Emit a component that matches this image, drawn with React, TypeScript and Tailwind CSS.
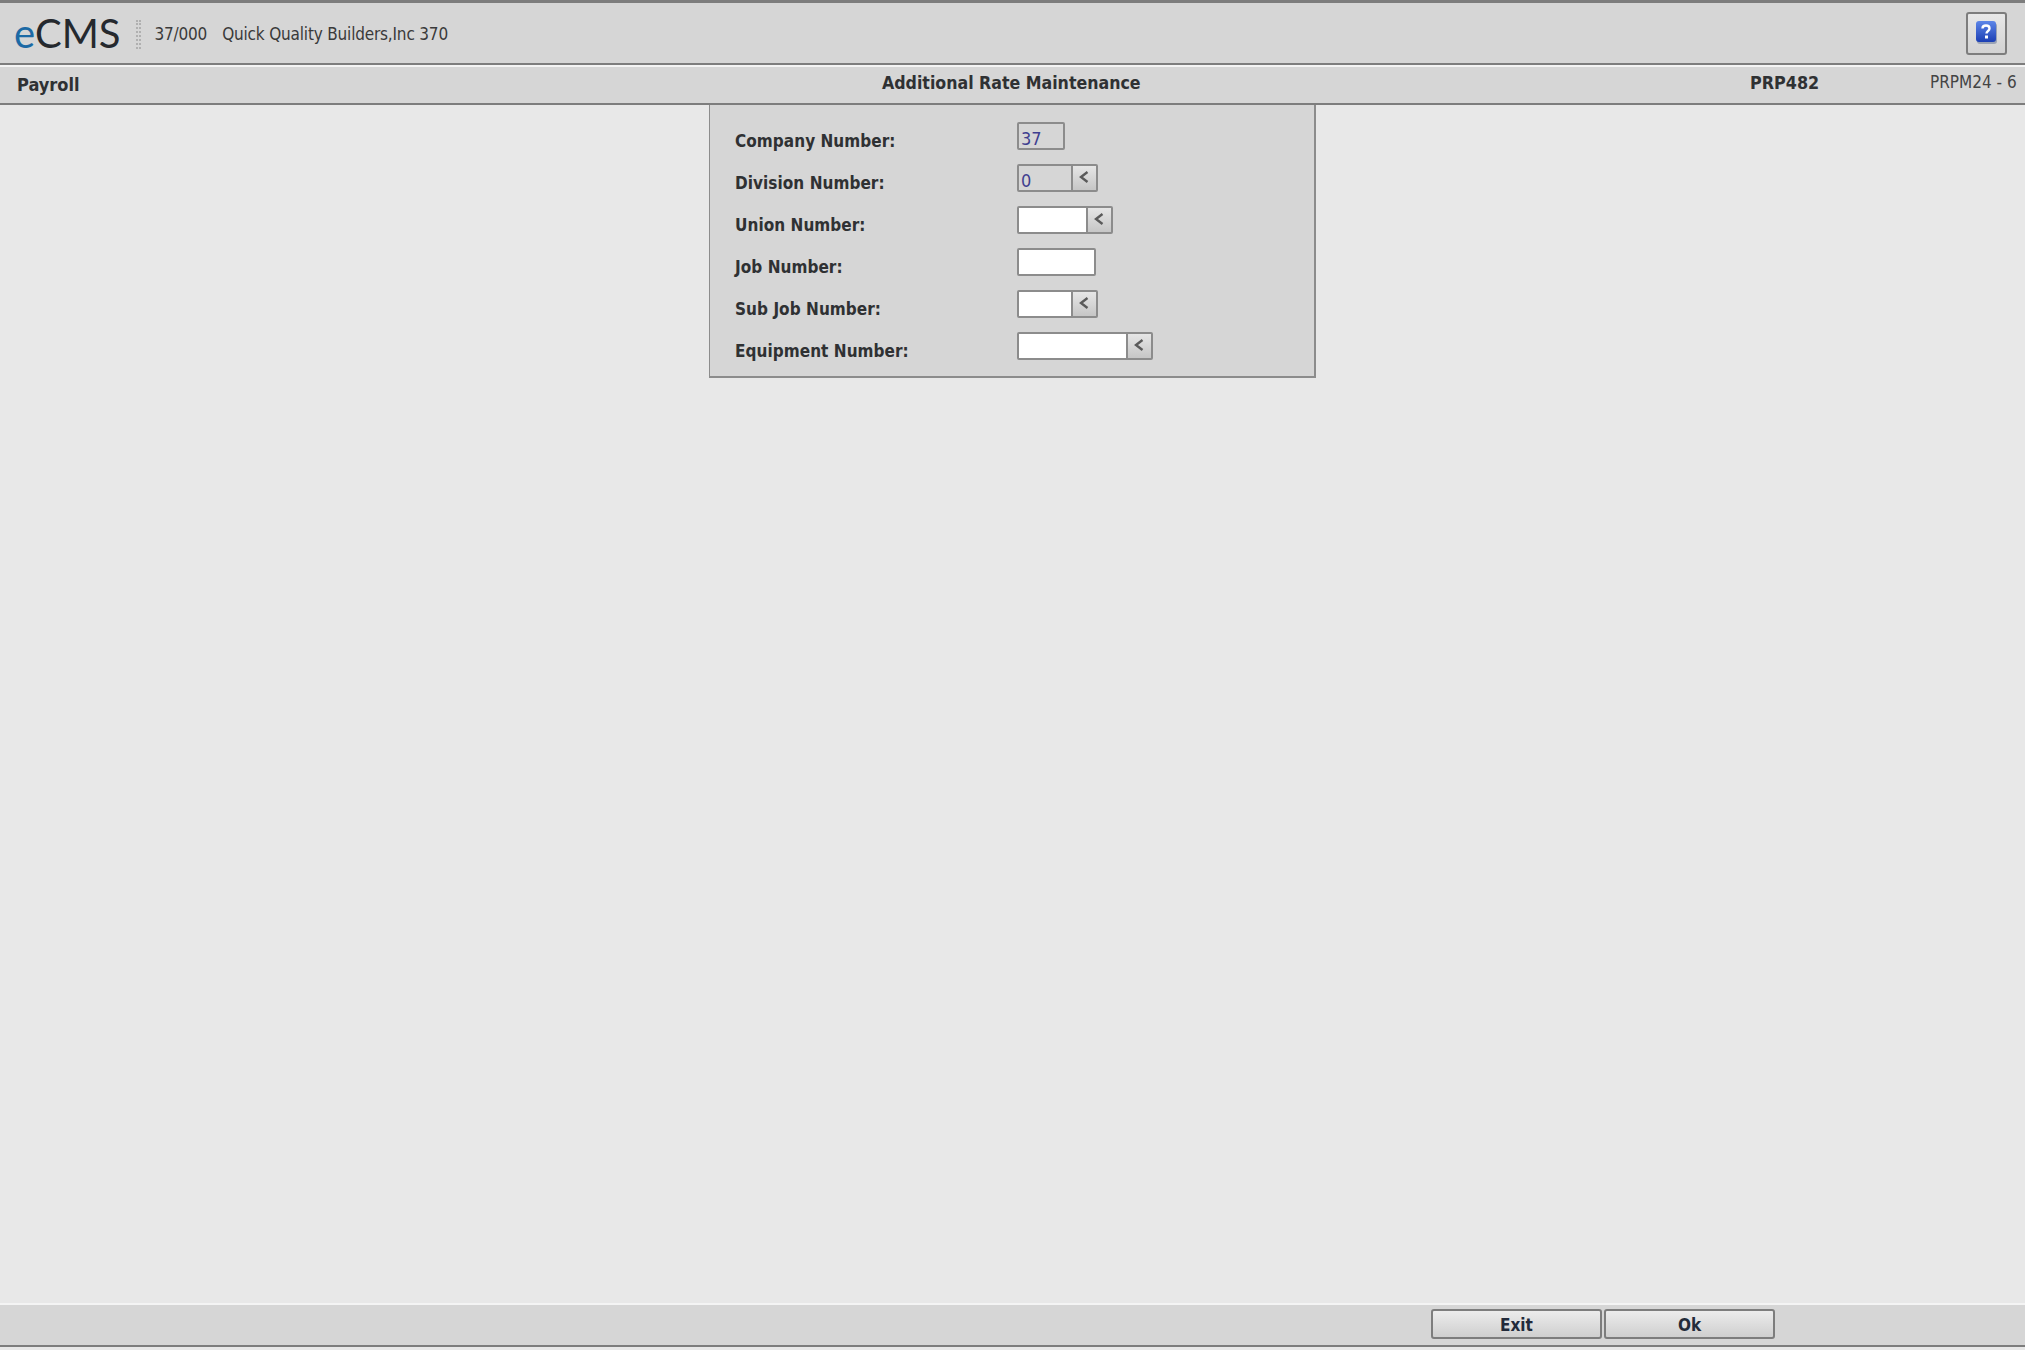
const FONT = "font-['DejaVu_Sans'] font-stretch-condensed";

interface Field {
  label: string;
  value?: string;
  width: number;
  readOnly?: boolean;
  lookup?: boolean;
}

const FIELDS: Field[] = [
  { label: "Company Number:", value: "37", width: 48, readOnly: true },
  { label: "Division Number:", value: "0", width: 56, readOnly: true, lookup: true },
  { label: "Union Number:", width: 71, lookup: true },
  { label: "Job Number:", width: 79 },
  { label: "Sub Job Number:", width: 56, lookup: true },
  { label: "Equipment Number:", width: 111, lookup: true },
];

function HelpIcon() {
  return (
    <svg width="24" height="26" viewBox="0 0 24 26">
      <defs>
        <linearGradient id="help" x1="0" y1="0" x2="0" y2="1">
          <stop offset="0" stopColor="#5d86e8" />
          <stop offset="1" stopColor="#1c3fb4" />
        </linearGradient>
      </defs>
      <rect x="2" y="3" width="20" height="21" rx="3" fill="#9aa3b5" />
      <rect x="1" y="1" width="20" height="21" rx="3" fill="url(#help)" />
      <path
        d="M7.5 8.5c0-2 1.500-3 3.500-3s3.500 1 3.500 3c0 2.500-3 2.500-3 5"
        fill="none"
        stroke="#fff"
        strokeWidth="2.400"
      />
      <rect x="10" y="15.500" width="3" height="3" fill="#fff" />
    </svg>
  );
}

function LookupButton() {
  return (
    <div className="flex w-[25px] items-center justify-center border-l-2 border-[#8c8c8c] bg-gradient-to-b from-[#e6e6e6] to-[#c6c6c6] pr-[2px] pb-[3px]">
      <svg width="12" height="14" viewBox="0 0 12 14">
        <path d="M9.5 2 3 7l6.500 5" fill="none" stroke="#5a5a5a" strokeWidth="2.400" />
      </svg>
    </div>
  );
}

function FieldRow({ field }: { field: Field }) {
  return (
    <div className="mb-[14px] flex h-[28px]">
      <label className="w-[282px] pt-[7px] text-[17px] leading-[24px] font-bold tracking-[0.05px] text-[#2f3133]">
        {field.label}
      </label>
      <div className="flex h-[28px] rounded-[2px] border-2 border-[#8c8c8c]">
        <div
          className={`pt-[2px] pl-[2px] text-[18px] leading-[26px] text-[#3f3f90] ${
            field.readOnly ? "bg-[#d6d6d6]" : "bg-white"
          }`}
          style={{ width: field.width - 4 }}
        >
          {field.value}
        </div>
        {field.lookup && <LookupButton />}
      </div>
    </div>
  );
}

function FooterButton({ label }: { label: string }) {
  return (
    <button className="h-[30px] w-[171px] rounded-[3px] border-2 border-[#7d7d7d] bg-gradient-to-b from-[#ececec] to-[#cfcfcf] pt-[2px] text-[17px] leading-none font-bold text-[#222a3a]">
      {label}
    </button>
  );
}

export default function App() {
  return (
    <div className={`flex h-[1350px] w-[2025px] flex-col overflow-hidden bg-[#e8e8e8] ${FONT}`}>
      <header className="flex h-[63px] items-center border-t-[3px] border-[#7d7d7d] bg-[#d6d6d6] pr-[18px] pl-[14px]">
        <div className="font-['Lato'] text-[40px] leading-none font-normal text-[#25292e]">
          <span className="text-[#1c6aa5]">e</span>CMS
        </div>
        <div className="mx-[15px] mt-[2px] h-[29px] w-[5px] border-x-2 border-dotted border-[#b0b0b0]" />
        <span className="mt-[3px] ml-[-1px] text-[17px] tracking-[-0.2px] text-[#3a3a3a]">37/000</span>
        <span className="mt-[3px] ml-[15px] text-[17px] tracking-[-0.18px] text-[#3a3a3a]">
          Quick Quality Builders,Inc 370
        </span>
        <button className="ml-auto flex h-[43px] w-[41px] items-center justify-center rounded-[3px] border-2 border-[#7d7d7d] bg-gradient-to-b from-[#e8e8e8] to-[#d2d2d2]">
          <HelpIcon />
        </button>
      </header>

      <div className="flex h-[42px] items-center border-t-2 border-b-2 border-t-[#7d7d7d] border-b-[#7d7d7d] bg-[#d6d6d6] shadow-[inset_0_2px_0_#f4f4f4] text-[18px] font-bold text-[#2f3133]">
        <span className="w-[882px] pl-[17px]">Payroll</span>
        <span className="mt-[-2px] w-[868px] text-[17.600px]">Additional Rate Maintenance</span>
        <span className="mt-[-2px] w-[180px] text-[17.800px]">PRP482</span>
        <span className="mt-[-2px] text-[17px] font-normal text-[#444]">PRPM24 - 6</span>
      </div>

      <main className="flex-1">
        <div className="mx-auto h-[273px] w-[607px] border-b-2 border-l border-r-2 border-[#8c8c8c] bg-[#d6d6d6] pt-[17px] pl-[25px]">
          {FIELDS.map((field) => (
            <FieldRow key={field.label} field={field} />
          ))}
        </div>
      </main>

      <footer className="mb-[3px] flex h-[44px] justify-end gap-[2px] border-b-2 border-[#7d7d7d] bg-[#d6d6d6] pt-[6px] pr-[250px] shadow-[inset_0_2px_0_#f4f4f4]">
        <FooterButton label="Exit" />
        <FooterButton label="Ok" />
      </footer>
    </div>
  );
}
